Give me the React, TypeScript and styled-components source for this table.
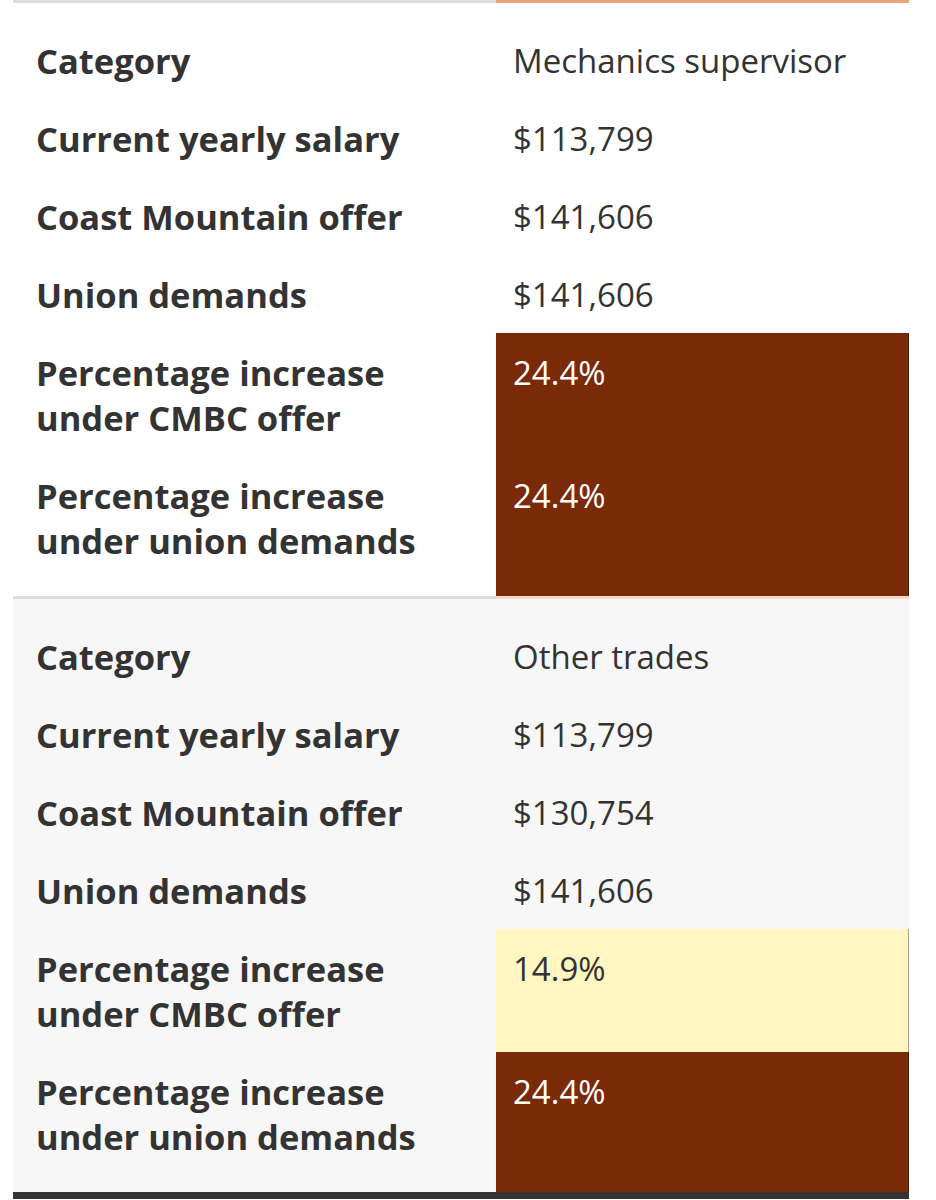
import styled, { createGlobalStyle, css } from 'styled-components';

const GlobalStyle = createGlobalStyle`
    body {
        margin: 0;
        background: #ffffff;
        font-family: "Open Sans", "Noto Sans", sans-serif;
        color: #333333;
    }
`;

const Wrapper = styled.div`
    padding: 0 27px 0 13px;
    width: 936px;
    box-sizing: border-box;
`;

const Table = styled.div`
    border-bottom: 7px solid #333333;
`;

const Section = styled.div<{ $shade: string }>`
    background: ${(p) => p.$shade};
`;

const Row = styled.div`
    display: grid;
    grid-template-columns: 483px 1fr;
`;

const edge = css<{ $first?: boolean; $last?: boolean }>`
    padding-top: ${(p) => (p.$first ? 35 : 17)}px;
    padding-bottom: ${(p) => (p.$last ? 33 : 16)}px;
    line-height: 45px;
`;

const Label = styled.div<{ $first?: boolean; $last?: boolean; $top?: string }>`
    ${edge};
    padding-left: 23px;
    padding-right: 40px;
    font-size: 34.5px;
    font-weight: 700;
    color: #333333;
    border-top: ${(p) => (p.$top ? `3px solid ${p.$top}` : 'none')};
`;

const Value = styled.div<{ $first?: boolean; $last?: boolean; $top?: string; $fill?: string; $ink?: string }>`
    ${edge};
    padding-left: 17px;
    font-size: 33px;
    font-weight: 400;
    color: ${(p) => p.$ink || '#333333'};
    background: ${(p) => p.$fill || 'transparent'};
    border-top: ${(p) => (p.$top ? `3px solid ${p.$top}` : 'none')};
    box-shadow: ${(p) => (p.$fill ? 'inset -1px 0 0 rgba(0, 0, 0, 0.35)' : 'none')};
`;

type Entry = { label: string; value: string; fill?: string; ink?: string };

const HIGH = '#7a2a07';
const MID = '#fff6c2';

const sections: { shade: string; top: string; entries: Entry[] }[] = [
    {
        shade: '#ffffff',
        top: '#e9a478',
        entries: [
            { label: 'Category', value: 'Mechanics supervisor' },
            { label: 'Current yearly salary', value: '$113,799' },
            { label: 'Coast Mountain offer', value: '$141,606' },
            { label: 'Union demands', value: '$141,606' },
            { label: 'Percentage increase under CMBC offer', value: '24.4%', fill: HIGH, ink: '#ffffff' },
            { label: 'Percentage increase under union demands', value: '24.4%', fill: HIGH, ink: '#ffffff' },
        ],
    },
    {
        shade: '#f7f7f7',
        top: '#f8d9c9',
        entries: [
            { label: 'Category', value: 'Other trades' },
            { label: 'Current yearly salary', value: '$113,799' },
            { label: 'Coast Mountain offer', value: '$130,754' },
            { label: 'Union demands', value: '$141,606' },
            { label: 'Percentage increase under CMBC offer', value: '14.9%', fill: MID },
            { label: 'Percentage increase under union demands', value: '24.4%', fill: HIGH, ink: '#ffffff' },
        ],
    },
];

export default function App() {
    return (
        <Wrapper>
            <GlobalStyle />
            <Table>
                {sections.map((s, si) => (
                    <Section key={si} $shade={s.shade}>
                        {s.entries.map((e, i) => {
                            const first = i === 0;
                            const last = i === s.entries.length - 1;
                            return (
                                <Row key={i}>
                                    <Label $first={first} $last={last} $top={first ? '#dddddd' : undefined}>
                                        {e.label}
                                    </Label>
                                    <Value
                                        $first={first}
                                        $last={last}
                                        $top={first ? s.top : undefined}
                                        $fill={e.fill}
                                        $ink={e.ink}
                                    >
                                        {e.value}
                                    </Value>
                                </Row>
                            );
                        })}
                    </Section>
                ))}
            </Table>
        </Wrapper>
    );
}
